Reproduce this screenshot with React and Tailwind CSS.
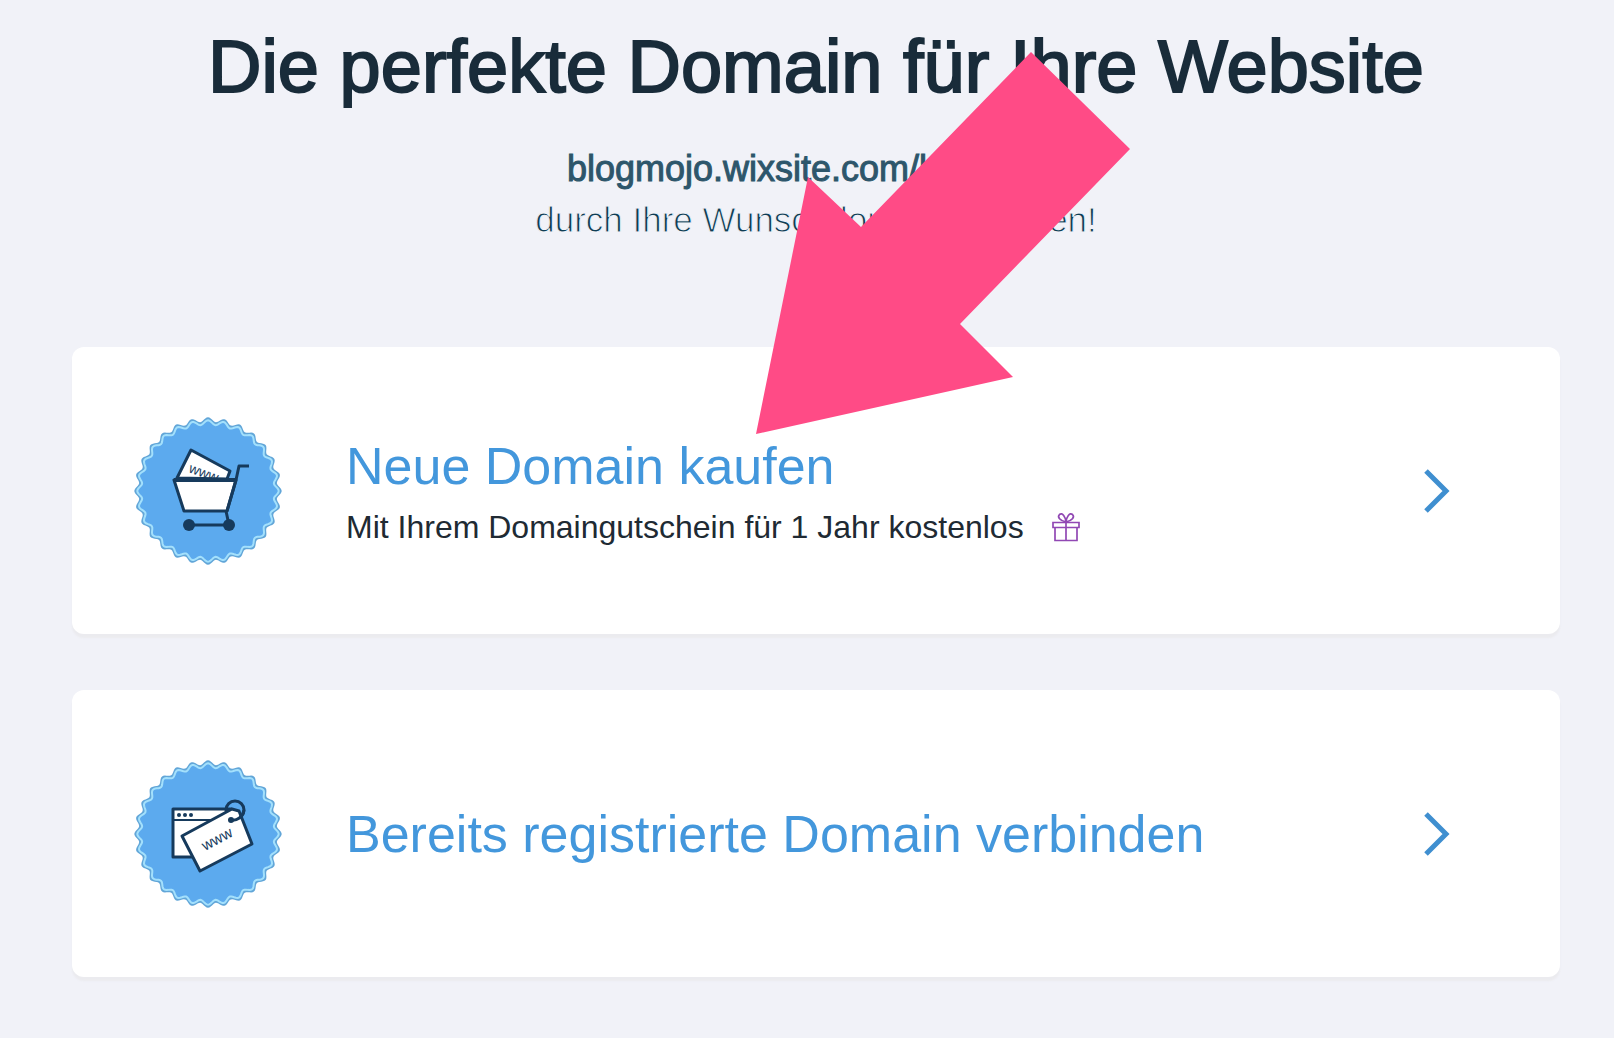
import React from 'react';
import { clsx } from 'clsx';

// Builds the wavy outline of the badge
const wavyCircle = (radius, depth, waves = 28) => {
  const points = [];
  const steps = waves * 12;
  for (let i = 0; i < steps; i++) {
    const angle = (i / steps) * Math.PI * 2;
    const r = radius + depth * Math.cos(angle * waves);
    points.push(`${(74 + r * Math.sin(angle)).toFixed(2)} ${(74 - r * Math.cos(angle)).toFixed(2)}`);
  }
  return `M${points.join('L')}Z`;
};

const Badge = ({ children }) => (
  <svg viewBox="0 0 148 148" className="size-[148px] shrink-0" aria-hidden="true">
    <path d={wavyCircle(71.5, 2.2)} fill="#62a6d8" />
    <path d={wavyCircle(68.5, 2.2)} fill="#5caaee" stroke="#a3e0fc" strokeWidth="2" />
    {children}
  </svg>
);

const CartBadge = () => (
  <Badge>
    <g stroke="#163a5c" strokeWidth="3" strokeLinejoin="round">
      <path d="M43 61 57 33 96 54 93 62Z" fill="#fff" />
      <text x="54" y="55" transform="rotate(20 54 55)" fill="#163a5c" stroke="none" className="font-['Liberation_Sans',sans-serif] text-[14px]">www</text>
      <path d="M40 63H102L93 94H50Z" fill="#fff" />
      <path d="M40 63H102" strokeWidth="4" />
      <path d="M93 94 102 63 105 49H115" fill="none" />
      <path d="M92 94 95 108H55" fill="none" />
    </g>
    <circle cx="55" cy="108" r="6" fill="#163a5c" />
    <circle cx="95" cy="108" r="6" fill="#163a5c" />
  </Badge>
);

const TagBadge = () => (
  <Badge>
    <g stroke="#163a5c" strokeWidth="3" strokeLinejoin="round">
      <path d="M60 97H39V49H98L80 90Z" fill="#fff" stroke="none" />
      <path d="M60 97H39V49H98" fill="none" />
      <path d="M39 60H80" strokeWidth="2" />
      <circle cx="101" cy="50" r="9" fill="none" />
      <path d="M48 76 98 49 105 51 118 84 66 111Z" fill="#fff" />
      <path d="M97 60C103 61 109 57 110 50" fill="none" />
    </g>
    <g fill="#163a5c">
      <circle cx="45" cy="55" r="2" />
      <circle cx="51" cy="55" r="2" />
      <circle cx="57" cy="55" r="2" />
      <circle cx="97" cy="60" r="3" />
      <text x="71" y="91" transform="rotate(-28 71 91)" className="font-['Liberation_Sans',sans-serif] text-[15px]">www</text>
    </g>
  </Badge>
);

const GiftIcon = () => (
  <svg viewBox="0 0 28 30" className="h-[30px] w-7 shrink-0" fill="none" stroke="#9148b4" strokeWidth="1.7" aria-hidden="true">
    <path d="M1 10.500H27V15.500H1ZM3 15.500V28.500H25V15.500M14 10.500V28.500" />
    <path d="M14 10C8 9 5 5 7.500 2.500C10.500 0 13.500 5 14 10C14.500 5 17.500 0 20.500 2.500C23 5 20 9 14 10Z" />
  </svg>
);

const Chevron = () => (
  <svg viewBox="0 0 26 44" className="h-11 w-[26px] shrink-0" fill="none" stroke="#3f8fd0" strokeWidth="5" aria-hidden="true">
    <path d="M2 2 22 22 2 42" />
  </svg>
);

const OptionCard = ({ badge, title, children }) => (
  <a
    href="#"
    className="flex min-h-[287px] items-center rounded-xl bg-white pr-[110px] pl-[62px] shadow-[0_4px_2px_#ebebef]"
  >
    {badge}
    <div className="ml-16 grow">
      <h2 className={clsx('text-[52px] leading-[60px] text-[#4397dc]', children && 'mt-1')}>{title}</h2>
      {children}
    </div>
    <Chevron />
  </a>
);

const App = () => {
  return (
    <main className="relative min-h-screen bg-[#f1f2f8] px-[54px] pb-[62px] pl-[72px] font-['Liberation_Sans',Arial,sans-serif]">
      <header className="pt-6 text-center">
        <h1 className="text-[74px] leading-[86px] text-[#192c3a] [-webkit-text-stroke:2px_#192c3a]">
          Die perfekte Domain für Ihre Website
        </h1>
        <p className="mt-[34px] text-[36px] leading-[50px] text-[#2d566b] [-webkit-text-stroke:1px_#2d566b]">
          blogmojo.wixsite.com/blogmojo
        </p>
        <p className="text-[35px] leading-[52px] text-[#0f3d54] [-webkit-text-stroke:1px_#f1f2f8]">
          durch Ihre Wunschdomain ersetzen!
        </p>
      </header>

      <section className="mt-[101px] flex flex-col gap-14">
        <OptionCard badge={<CartBadge />} title="Neue Domain kaufen">
          <p className="mt-2 flex items-center gap-7 text-[32px] leading-[46px] text-[#202a33]">
            Mit Ihrem Domaingutschein für 1 Jahr kostenlos
            <GiftIcon />
          </p>
        </OptionCard>
        <OptionCard badge={<TagBadge />} title="Bereits registrierte Domain verbinden" />
      </section>

      {/* Arrow pointing at the first option */}
      <svg
        viewBox="0 0 374 382"
        className="pointer-events-none absolute top-[52px] left-1/2 ml-[-51px] h-[382px] w-[374px]"
        aria-hidden="true"
      >
        <path d="M0 382 52 125 105 175 275 0 374 97 204 272 257 325Z" fill="#ff4b86" />
      </svg>
    </main>
  );
};

export default App;
